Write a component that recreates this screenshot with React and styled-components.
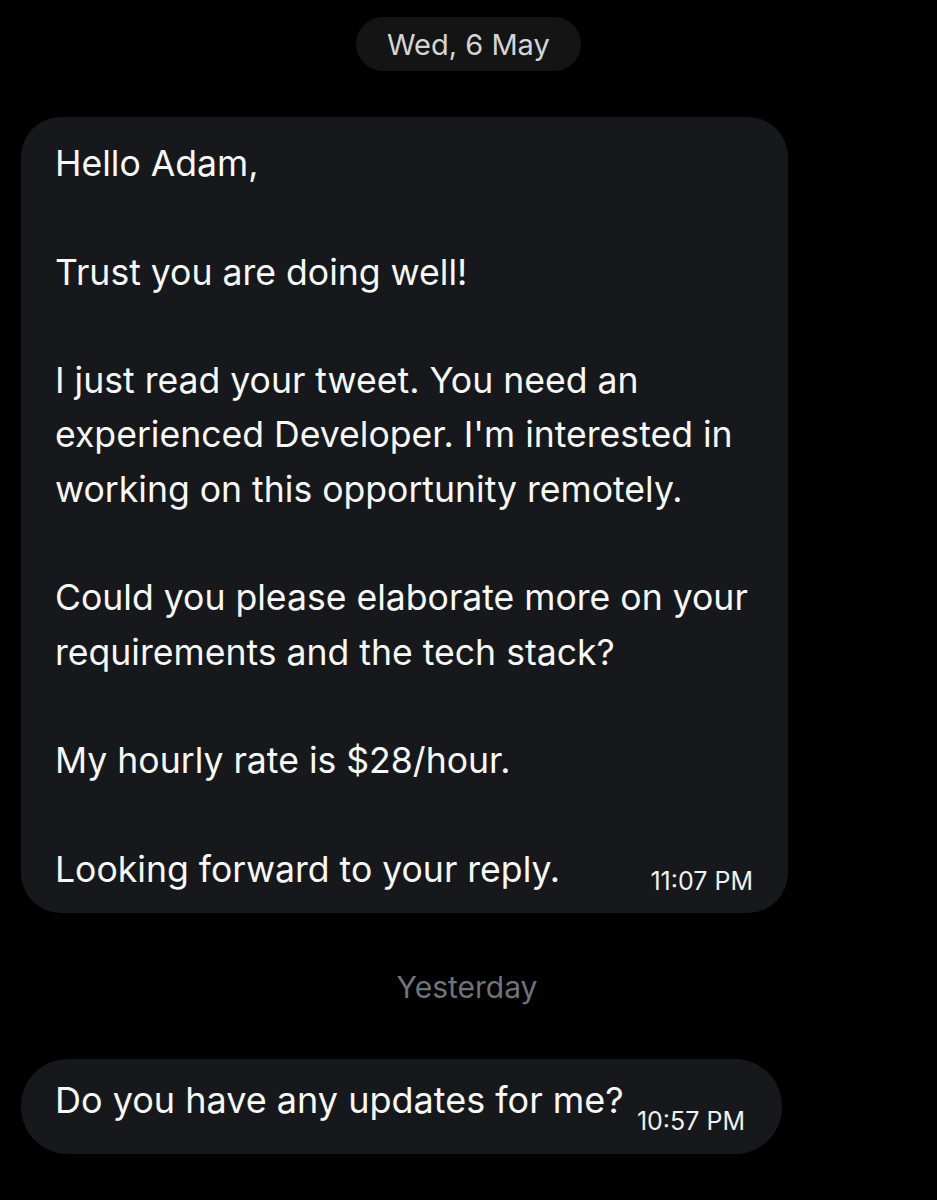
import React from "react";
import styled, { createGlobalStyle } from "styled-components";

const Global = createGlobalStyle`
  html, body { margin: 0; padding: 0; background: #000; }
  body { font-family: Inter, "Noto Sans", sans-serif; color: #f5f6f7; -webkit-font-smoothing: antialiased; }
`;

const Page = styled.div`
  width: 937px;
  height: 1200px;
  background: #000;
  box-sizing: border-box;
  padding: 17px 0 0 21px;
  display: flex;
  flex-direction: column;
  overflow: hidden;
`;

const DatePill = styled.div`
  align-self: flex-start;
  margin-left: 335px;
  height: 54px;
  padding: 0 31px;
  border-radius: 27px;
  background: #141414;
  color: #d4d4d4;
  font-size: 29px;
  display: flex;
  align-items: center;
`;

const DayLabel = styled.div`
  width: 892px;
  text-align: center;
  color: #6f7479;
  font-size: 30px;
  line-height: 34px;
  margin: ${(p) => p.$mt}px 0 ${(p) => p.$mb}px;
`;

const Bubble = styled.div`
  width: ${(p) => p.$w}px;
  box-sizing: border-box;
  background: #16181b;
  border-radius: ${(p) => p.$r}px;
  padding: ${(p) => p.$pad};
  margin-top: ${(p) => p.$mt || 0}px;
  font-size: ${(p) => p.$fs || 35.6}px;
  line-height: 54.3px;
  color: #f7f8f9;
`;

const Para = styled.p`
  margin: 0 0 54.3px;
  &:last-child { margin-bottom: 0; }
`;

const LastLine = styled.div`
  display: flex;
  justify-content: space-between;
  align-items: baseline;
`;

const Time = styled.span`
  font-size: 25px;
  line-height: 30px;
  color: #eef0f2;
  position: relative;
  top: ${(p) => p.$dy}px;
  margin-right: ${(p) => p.$mr || 0}px;
`;

export default function App() {
  return (
    <Page>
      <Global />
      <DatePill>Wed, 6 May</DatePill>
      <Bubble $w={767} $r={40} $pad="20px 33px 16px 34px" $mt={46}>
        <Para>Hello Adam,</Para>
        <Para>Trust you are doing well!</Para>
        <Para>
          I just read your tweet. You need an experienced Developer. I'm
          interested in working on this opportunity remotely.
        </Para>
        <Para>
          Could you please elaborate more on your requirements and the tech
          stack?
        </Para>
        <Para>My hourly rate is $28/hour.</Para>
        <LastLine>
          <span>Looking forward to your reply.</span>
          <Time $dy={8} $mr={2}>11:07 PM</Time>
        </LastLine>
      </Bubble>
      <DayLabel $mt={57} $mb={55}>Yesterday</DayLabel>
      <Bubble $w={761} $r={47} $fs={36} $pad="14px 37px 27px 34px">
        <LastLine>
          <span>Do you have any updates for me?</span>
          <Time $dy={17}>10:57 PM</Time>
        </LastLine>
      </Bubble>
    </Page>
  );
}
